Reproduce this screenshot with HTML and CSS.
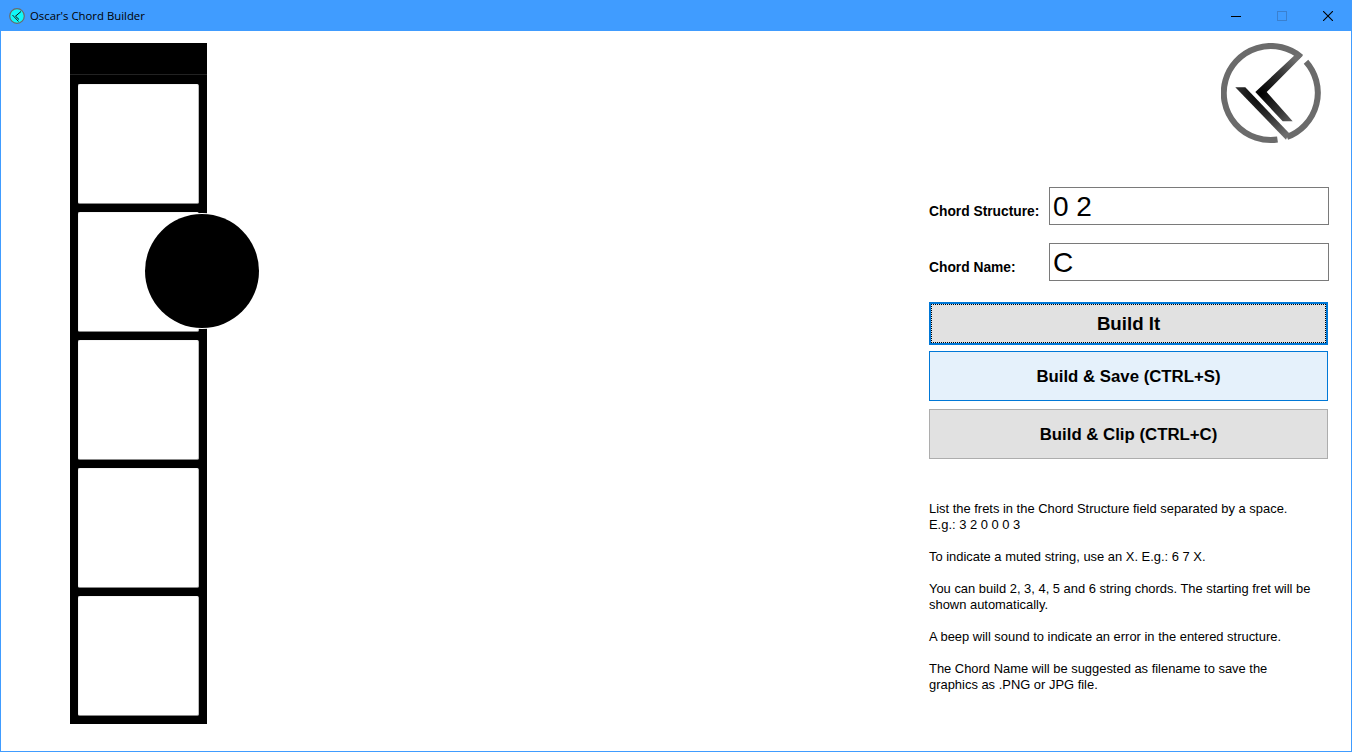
FILE: index.html
```html
<!DOCTYPE html>
<html lang="en">
<head>
    <meta charset="UTF-8">
    <meta name="viewport" content="width=device-width, initial-scale=1.0">
    <title>Oscar's Chord Builder</title>
    <link rel="stylesheet" href="styles.css">
</head>
<body>
    <div class="window">
        <!-- Title bar -->
        <div class="titlebar">
            <svg class="app-icon" viewBox="0 0 16 16">
                <circle cx="8" cy="8" r="7.3" fill="#10f8f8" stroke="#6a6a6a" stroke-width="1.2"/>
                <path d="M12 3.5 L6.5 8.2 L10 11.5" fill="none" stroke="#111" stroke-width="1"/>
                <path d="M3.5 7 L9.5 13.5" fill="none" stroke="#222" stroke-width="1"/>
            </svg>
            <span class="app-title">Oscar's Chord Builder</span>
            <div class="controls">
                <div class="control">
                    <svg viewBox="0 0 10 10" class="control-icon"><path d="M0 5.5 H10" stroke="#000" stroke-width="1"/></svg>
                </div>
                <div class="control">
                    <svg viewBox="0 0 10 10" class="control-icon"><rect x="0.5" y="0.5" width="9" height="9" fill="none" stroke="#3a80cf" stroke-width="1"/></svg>
                </div>
                <div class="control">
                    <svg viewBox="0 0 10 10" class="control-icon"><path d="M0 0 L10 10 M10 0 L0 10" stroke="#000" stroke-width="1.1"/></svg>
                </div>
            </div>
        </div>

        <div class="content">
            <!-- Chord diagram -->
            <div class="board">
                <div class="nut"></div>
                <div class="frets">
                    <div class="fret"></div>
                    <div class="fret"></div>
                    <div class="fret"></div>
                    <div class="fret"></div>
                    <div class="fret"></div>
                </div>
                <div class="finger"></div>
            </div>

            <!-- Right panel -->
            <div class="panel">
                <div class="logo-row">
                    <svg class="logo" viewBox="0 0 100 100">
                        <defs>
                            <radialGradient id="logo-shade" gradientUnits="userSpaceOnUse" cx="40" cy="50" r="48">
                                <stop offset="0" stop-color="#000"/>
                                <stop offset="0.55" stop-color="#333"/>
                                <stop offset="1" stop-color="#6e6e6e"/>
                            </radialGradient>
                        </defs>
                        <path d="M56.5 96.5 A47 47 0 1 1 80 14" fill="none" stroke="#6b6b6b" stroke-width="6"/>
                        <path d="M85 18.7 A47 47 0 0 1 66 94" fill="none" stroke="#6b6b6b" stroke-width="6"/>
                        <path d="M34.3 49 L76 10 L82 12.5 L45.7 49 L71.7 78.3 L61.7 78.3 Z" fill="url(#logo-shade)"/>
                        <path d="M14.3 44.3 L24.3 44.3 L68 90 L65 96.7 Z" fill="url(#logo-shade)"/>
                    </svg>
                </div>

                <div class="field">
                    <label class="field-label">Chord Structure:</label>
                    <input class="field-input" type="text" value="0 2">
                </div>
                <div class="field">
                    <label class="field-label">Chord Name:</label>
                    <input class="field-input" type="text" value="C">
                </div>

                <button class="btn btn-default">Build It</button>
                <button class="btn btn-hover">Build &amp; Save (CTRL+S)</button>
                <button class="btn">Build &amp; Clip (CTRL+C)</button>

                <div class="help">
                    <p>List the frets in the Chord Structure field separated by a space.<br>E.g.: 3 2 0 0 0 3</p>
                    <p>To indicate a muted string, use an X. E.g.: 6 7 X.</p>
                    <p>You can build 2, 3, 4, 5 and 6 string chords. The starting fret will be<br>shown automatically.</p>
                    <p>A beep will sound to indicate an error in the entered structure.</p>
                    <p>The Chord Name will be suggested as filename to save the<br>graphics as .PNG or JPG file.</p>
                </div>
            </div>
        </div>
    </div>
</body>
</html>
```

FILE: styles.css
```css
html, body {
    margin: 0;
    padding: 0;
}
body {
    font-family: "Liberation Sans", Arial, sans-serif;
    background-color: #fff;
    color: #000;
}
.window {
    width: 1352px;
    height: 752px;
    box-sizing: border-box;
    border: 1px solid #409cff;
    border-top: none;
    overflow: hidden;
}
.titlebar {
    height: 31px;
    display: flex;
    align-items: center;
    background-color: #409cff;
    padding-left: 8px;
}
.app-icon {
    width: 16px;
    height: 16px;
    margin-right: 5px;
}
.app-title {
    font-family: "Open Sans", sans-serif;
    font-size: 11.35px;
    color: #000;
}
.controls {
    display: flex;
    margin-left: auto;
}
.control {
    width: 46px;
    height: 30px;
    display: flex;
    align-items: center;
    justify-content: center;
}
.control-icon {
    width: 10px;
    height: 10px;
}
.content {
    display: flex;
    justify-content: space-between;
    padding: 12px 22px 0 69px;
}
.board {
    position: relative;
    width: 137px;
    height: 681px;
    box-sizing: border-box;
    background-color: #000;
    padding: 0 8px;
}
.nut {
    height: 31px;
    border-bottom: 1px solid #222;
    margin: 0 -8px 9px;
}
.frets {
    display: flex;
    flex-direction: column;
    gap: 8px;
}
.fret {
    height: 120px;
    width: 121px;
    box-sizing: border-box;
    background-color: #fff;
    border-radius: 2px;
    border: 1px solid #f4f4f4;
    border-right-color: #bbb;
    border-bottom-color: #888;
}
.finger {
    position: absolute;
    left: 75px;
    top: 171px;
    width: 114px;
    height: 114px;
    border-radius: 50%;
    background-color: #000;
    box-shadow: 0 0 0 1px #fff;
}
.panel {
    width: 400px;
    display: flex;
    flex-direction: column;
    align-items: flex-start;
}
.logo-row {
    width: 100%;
    display: flex;
    justify-content: flex-end;
    padding-right: 8px;
    box-sizing: border-box;
    margin-bottom: 44px;
}
.logo {
    width: 100px;
    height: 100px;
    display: block;
}
.field {
    width: 100%;
    display: flex;
    align-items: center;
    margin-bottom: 18px;
}
.field-label {
    width: 120px;
    padding-top: 10px;
    font-size: 13.8px;
    font-weight: bold;
}
.field-input {
    width: 280px;
    height: 38px;
    box-sizing: border-box;
    border: 1px solid #7a7a7a;
    padding: 1px 3px 0;
    font-family: "Liberation Sans", Arial, sans-serif;
    font-size: 28px;
    color: #000;
    outline: none;
}
.btn {
    width: 399px;
    height: 50px;
    margin: 0 0 8px;
    padding: 2px 0 0;
    box-sizing: border-box;
    border: 1px solid #adadad;
    background-color: #e1e1e1;
    font-family: "Liberation Sans", Arial, sans-serif;
    font-size: 16.8px;
    font-weight: bold;
    color: #000;
}
.btn-default {
    height: 43px;
    margin-top: 3px;
    margin-bottom: 6px;
    padding: 0;
    border: 2px solid #0078d7;
    outline: 1px dotted #000;
    outline-offset: -3px;
    font-size: 18.67px;
}
.btn-hover {
    border-color: #0078d7;
    background-color: #e5f1fb;
}
.help {
    margin-top: 34px;
    width: 399px;
    font-size: 12.93px;
    line-height: 16px;
}
.help p {
    margin: 0 0 16px;
}
```
